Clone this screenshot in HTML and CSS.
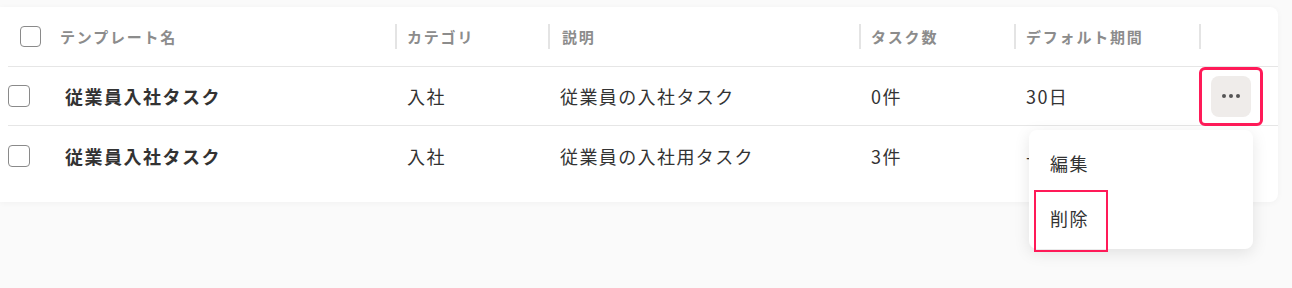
FILE: index.html
```html
<!DOCTYPE html>
<html lang="ja">
<head>
    <meta charset="UTF-8">
    <title>テンプレート一覧</title>
    <link rel="stylesheet" href="styles.css">
</head>
<body>
    <div class="page">
        <div class="card">
            <!-- En-tête -->
            <div class="row head">
                <div class="cell first"><span class="check"></span><span>テンプレート名</span></div>
                <div class="cell">カテゴリ</div>
                <div class="cell desc">説明</div>
                <div class="cell">タスク数</div>
                <div class="cell">デフォルト期間</div>
                <div class="cell"></div>
            </div>

            <div class="row body">
                <div class="cell first"><span class="check"></span><span class="name">従業員入社タスク</span></div>
                <div class="cell">入社</div>
                <div class="cell desc">従業員の入社タスク</div>
                <div class="cell">0件</div>
                <div class="cell">30日</div>
                <div class="cell action">
                    <button class="more"><i></i><i></i><i></i></button>
                    <span class="mark mark-btn"></span>
                    <div class="menu">
                        <div class="menu-item">編集</div>
                        <div class="menu-item">削除<span class="mark mark-item"></span></div>
                    </div>
                </div>
            </div>

            <div class="row body last">
                <div class="cell first"><span class="check"></span><span class="name">従業員入社タスク</span></div>
                <div class="cell">入社</div>
                <div class="cell desc">従業員の入社用タスク</div>
                <div class="cell">3件</div>
                <div class="cell">-</div>
                <div class="cell action"></div>
            </div>
        </div>
    </div>
</body>
</html>
```

FILE: styles.css
```css
* { box-sizing: border-box; margin: 0; padding: 0; }
body {
    font-family: "Noto Sans CJK JP", "Noto Sans", sans-serif;
    background-color: #fafafa;
    color: #333;
    width: 1292px;
    height: 288px;
    overflow: hidden;
}

.page { padding-top: 7px; }
.card { width: 1278px; background: #fff; border-radius: 0 8px 8px 0; box-shadow: 0 1px 6px rgba(0, 0, 0, 0.04); padding-bottom: 17px; }

.row { display: grid; grid-template-columns: 387px 153px 311px 155px 185px 1fr; margin-left: 8px; align-items: center; }
.row.head { height: 60px; border-bottom: 1px solid #e6e6e6; }
.row.body { height: 59px; border-bottom: 1px solid #e6e6e6; }
.row.body.last { border-bottom: none; }

.cell { display: flex; align-items: center; padding-left: 12px; font-size: 18px; letter-spacing: 1.4px; white-space: nowrap; }
.head .cell { height: 25px; border-left: 2px solid #e4e4e4; padding-left: 10px; font-size: 15px; font-weight: 700; color: #8c8c8c; letter-spacing: 1.8px; }
.head .cell.desc { padding-left: 12px; }
.head .cell.first { border-left: none; padding-left: 12px; gap: 19px; }
.body .cell.first { padding-left: 0; gap: 35px; }
.name { font-weight: 700; font-size: 18px; letter-spacing: 1.5px; }

.check { width: 21px; height: 21px; border: 1.5px solid #8a8a8a; border-radius: 4px; flex-shrink: 0; }
.body .check { width: 22px; height: 22px; }

.action { position: relative; height: 100%; }
.more { width: 40px; height: 41px; border: none; border-radius: 8px; background: #efecea; display: flex; align-items: center; justify-content: center; gap: 3px; }
.more i { width: 4px; height: 4px; border-radius: 50%; background: #555; }

/* annotations */
.mark { position: absolute; border: 3px solid #ff1a58; border-radius: 6px; pointer-events: none; }
.mark-btn { left: 0; top: 0; width: 64px; height: 59px; }
.mark-item { left: 0; top: 0; width: 74px; height: 62px; border-width: 2px; border-radius: 0; }

.menu { position: absolute; top: 63px; right: 25px; width: 224px; background: #fff; border-radius: 8px; box-shadow: 0 4px 16px rgba(0, 0, 0, 0.1); padding: 5px 0 4px; z-index: 2; }
.menu-item { position: relative; height: 55px; display: flex; align-items: center; padding-left: 21px; font-size: 18px; letter-spacing: 1.4px; color: #333; }
.menu-item .mark { left: 5px; top: 0; }
```
